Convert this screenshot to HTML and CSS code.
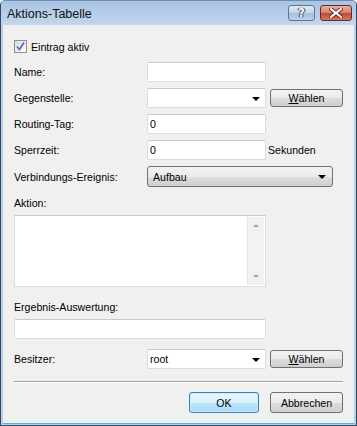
FILE: index.html
```html
<!DOCTYPE html>
<html lang="de">
<head>
<meta charset="UTF-8">
<title>Aktions-Tabelle</title>
<link rel="stylesheet" href="styles.css">
</head>
<body>

<!-- WINDOW -->
<div class="window">
  <div class="titlebar">
    <span class="title">Aktions-Tabelle</span>
    <div class="caption">
      <div class="cap help">?</div>
      <div class="cap close">
        <svg width="14" height="10" viewBox="0 0 14 10">
          <path d="M2 1 L12 9 M12 1 L2 9" stroke="#5a2418" stroke-width="4" stroke-linecap="square"/>
          <path d="M2 1 L12 9 M12 1 L2 9" stroke="#fff" stroke-width="2.2" stroke-linecap="square"/>
        </svg>
      </div>
    </div>
  </div>

  <div class="client">
    <!-- CHECKBOX -->
    <label class="check-row">
      <span class="checkbox">
        <svg width="11" height="11" viewBox="0 0 11 11">
          <path d="M2 5.5 L4.5 8.5 L9 1.5" fill="none" stroke="#5b71b0" stroke-width="1.7"/>
        </svg>
      </span>
      Eintrag aktiv
    </label>

    <!-- FORM ROWS -->
    <div class="row first">
      <span class="lbl">Name:</span>
      <div class="field"></div>
    </div>
    <div class="row">
      <span class="lbl">Gegenstelle:</span>
      <div class="field combo"><span class="arrow"></span></div>
      <div class="btn small"><u>W</u>ählen</div>
    </div>
    <div class="row">
      <span class="lbl">Routing-Tag:</span>
      <div class="field">0</div>
    </div>
    <div class="row">
      <span class="lbl">Sperrzeit:</span>
      <div class="field">0</div>
      <span class="unit">Sekunden</span>
    </div>
    <div class="row tall">
      <span class="lbl">Verbindungs-Ereignis:</span>
      <div class="dropdown">Aufbau<span class="arrow"></span></div>
    </div>

    <div class="caption-lbl">Aktion:</div>
    <div class="textarea">
      <div class="scrollbar">
        <span class="sarrow up"></span>
        <span class="sarrow down"></span>
      </div>
    </div>

    <div class="caption-lbl second">Ergebnis-Auswertung:</div>
    <div class="field wide"></div>

    <div class="row owner">
      <span class="lbl">Besitzer:</span>
      <div class="field combo">root<span class="arrow"></span></div>
      <div class="btn small"><u>W</u>ählen</div>
    </div>

    <div class="separator"></div>

    <!-- BUTTONS -->
    <div class="actions">
      <div class="btn default">OK</div>
      <div class="btn">Abbrechen</div>
    </div>
  </div>
</div>

</body>
</html>
```

FILE: styles.css
```css
body {
  margin: 0;
  font-family: 'Liberation Sans', Arial, sans-serif;
  font-size: 10.6px;
  color: #000;
}
.window {
  width: 357px;
  height: 426px;
  box-sizing: border-box;
  display: flex;
  flex-direction: column;
  background: #b9cfe8;
  border: 1px solid #2d4a6b;
  border-top-color: #6d8db3;
  border-radius: 5px 5px 0 0;
  overflow: hidden;
}
.titlebar {
  height: 24px;
  display: flex;
  align-items: center;
  justify-content: space-between;
  padding: 0 4px 0 6px;
  background: linear-gradient(#a9c3e1, #b8cfe9 60%, #c2d7ee);
  flex-shrink: 0;
}
.title {
  font-size: 12.5px;
  color: #111;
  margin-top: 1px;
}
.caption {
  display: flex;
  align-self: flex-start;
  margin-top: 4px;
  gap: 5px;
}
.cap {
  height: 16px;
  box-sizing: border-box;
  border: 1px solid #5d7895;
  border-radius: 3px;
  display: flex;
  align-items: center;
  justify-content: center;
}
.help {
  width: 27px;
  background: linear-gradient(#dfe9f4, #c4d5e8 50%, #a9bfd8 51%, #bcd0e5);
  font-family: 'DejaVu Sans', sans-serif;
  font-weight: bold;
  font-size: 12px;
  color: #fff;
  text-shadow: 0 0 1px #2e425a, 0 0 1px #2e425a, 1px 0 0 #2e425a, -1px 0 0 #2e425a;
}
.close {
  width: 32px;
  border-color: #6b2a20;
  background: linear-gradient(#e6b0a6, #d47e6c 50%, #c2492d 51%, #d1775f);
}
.client {
  flex: 1;
  background: #f0f0f0;
  margin: 0 2px 2px 2px;
  padding: 0 11px;
  box-shadow: 0 1px 0 #4fb0e0;
}
.check-row {
  display: flex;
  align-items: center;
  gap: 4px;
  margin-top: 15px;
  height: 13px;
}
.checkbox {
  width: 13px;
  height: 13px;
  box-sizing: border-box;
  border: 1px solid #8e8f8f;
  background: linear-gradient(135deg, #dcdcdc, #fbfbfb);
  display: flex;
  align-items: center;
  justify-content: center;
}
.row {
  display: grid;
  grid-template-columns: 129px 119px 73px;
  column-gap: 4px;
  align-items: center;
  height: 20px;
  margin-top: 6px;
}
.row.first {
  margin-top: 9px;
}
.row.tall {
  height: 21px;
}
.row.owner {
  margin-top: 10px;
}
.field {
  height: 20px;
  box-sizing: border-box;
  background: #fff;
  border: 1px solid #d9dce0;
  border-top-color: #c6c9ce;
  border-radius: 2px;
  padding: 3px 2px 0;
  position: relative;
}
.field.wide {
  width: 252px;
  margin-top: 5px;
}
.combo .arrow {
  position: absolute;
  right: 5px;
  top: 8px;
}
.arrow {
  width: 0;
  height: 0;
  border-left: 4px solid transparent;
  border-right: 4px solid transparent;
  border-top: 4px solid #000;
}
.unit {
  margin-left: -2px;
}
.dropdown {
  grid-column: 2 / 4;
  width: 186px;
  height: 21px;
  box-sizing: border-box;
  border: 1px solid #707070;
  border-radius: 3px;
  background: linear-gradient(#f2f2f2, #ebebeb 50%, #dddddd 51%, #cfcfcf);
  display: flex;
  align-items: center;
  justify-content: space-between;
  padding: 0 6px 0 5px;
}
.btn {
  height: 21px;
  box-sizing: border-box;
  border: 1px solid #707070;
  border-radius: 3px;
  background: linear-gradient(#f2f2f2, #ebebeb 50%, #dddddd 51%, #cfcfcf);
  display: flex;
  align-items: center;
  justify-content: center;
  width: 73px;
}
.btn.small {
  height: 18px;
}
.btn.default {
  width: 70px;
  border-color: #3c7fb1;
  background: linear-gradient(#eaf6fd, #d9f0fc 50%, #bee6fd 51%, #a7d9f5);
  box-shadow: inset 0 0 0 1px #c8ecfd;
}
.caption-lbl {
  margin-top: 9px;
  height: 14px;
  line-height: 14px;
}
.caption-lbl.second {
  margin-top: 13px;
}
.textarea {
  width: 252px;
  height: 72px;
  box-sizing: border-box;
  margin-top: 5px;
  background: #fff;
  border: 1px solid #d9dce0;
  border-top-color: #c6c9ce;
  display: flex;
  justify-content: flex-end;
  padding: 1px;
}
.scrollbar {
  width: 16px;
  background: #f2f2f2;
  border-left: 1px solid #e6e6e6;
  display: flex;
  flex-direction: column;
  justify-content: space-between;
  align-items: center;
  padding: 7px 0 7px;
}
.sarrow {
  width: 0;
  height: 0;
  border-left: 3px solid transparent;
  border-right: 3px solid transparent;
}
.sarrow.up {
  border-bottom: 3px solid #a3a3a3;
}
.sarrow.down {
  border-top: 3px solid #a3a3a3;
}
.separator {
  margin-top: 12px;
  height: 0;
  border-top: 1px solid #a0a0a0;
  border-bottom: 1px solid #fff;
}
.actions {
  display: flex;
  justify-content: flex-end;
  gap: 11px;
  margin-top: 9px;
}
```
